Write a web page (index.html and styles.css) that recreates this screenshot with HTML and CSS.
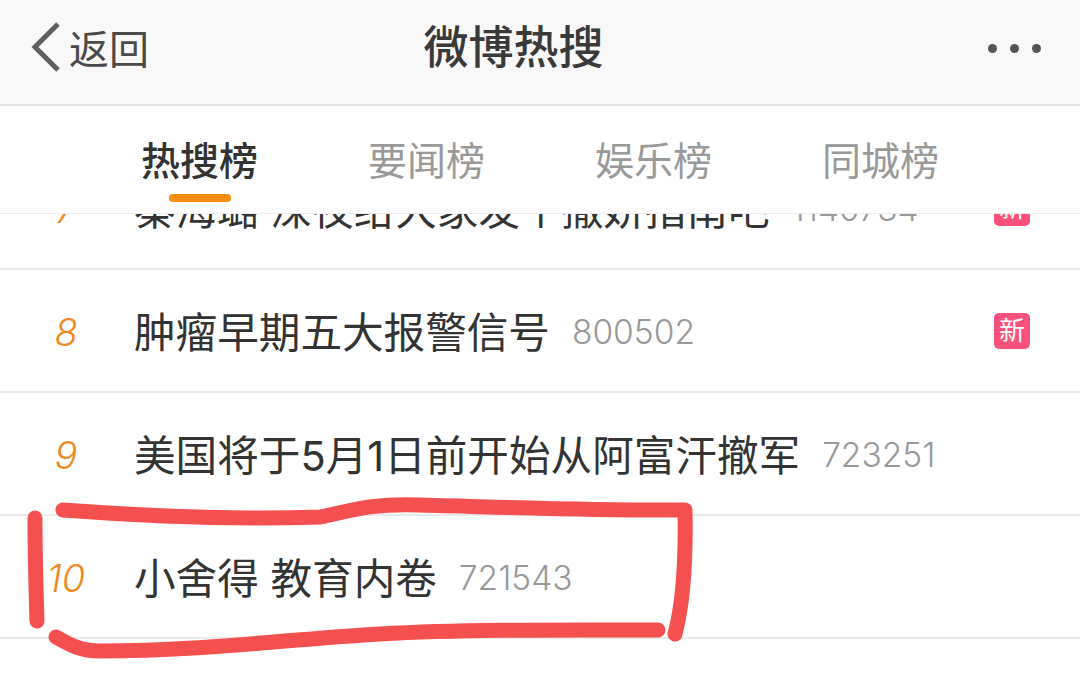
FILE: index.html
```html
<!DOCTYPE html>
<html lang="zh-CN">
<head>
    <meta charset="UTF-8">
    <meta name="viewport" content="width=device-width, initial-scale=1.0">
    <title>微博热搜</title>
    <link rel="stylesheet" href="styles.css">
</head>
<body>
    <div class="page">
        <header class="navbar">
            <div class="back">
                <svg class="back-icon" width="32" height="50" viewBox="0 0 32 50"><path d="M28 2 L5 25 L28 48" fill="none" stroke="#606060" stroke-width="5"/></svg>
                <span>返回</span>
            </div>
            <h1 class="nav-title">微博热搜</h1>
            <div class="more"><i></i><i></i><i></i></div>
        </header>

        <nav class="tabs">
            <div class="tab active">热搜榜</div>
            <div class="tab">要闻榜</div>
            <div class="tab">娱乐榜</div>
            <div class="tab">同城榜</div>
        </nav>

        <div class="list">
            <div class="row row-clipped">
                <span class="rank">7</span>
                <span class="title">秦海璐 深夜给大家发个撒娇指南吧</span>
                <span class="count">1140734</span>
                <span class="badge">新</span>
            </div>
            <div class="row">
                <span class="rank">8</span>
                <span class="title">肿瘤早期五大报警信号</span>
                <span class="count">800502</span>
                <span class="badge">新</span>
            </div>
            <div class="row">
                <span class="rank">9</span>
                <span class="title">美国将于5月1日前开始从阿富汗撤军</span>
                <span class="count">723251</span>
            </div>
            <div class="row">
                <span class="rank">10</span>
                <span class="title">小舍得 教育内卷</span>
                <span class="count">721543</span>
            </div>
        </div>

        <!-- red marker drawn over the screenshot -->
        <svg class="marker" width="1080" height="675" viewBox="0 0 1080 675">
            <g fill="none" stroke="#f55050" stroke-width="15" stroke-linecap="round" stroke-linejoin="round">
                <path d="M35 518 C35 550 36 590 37 621"/>
                <path d="M63 510 C130 515 230 520 320 517 C350 511 370 503 420 505 C500 507 600 511 685 510 C686 560 684 600 675 634"/>
                <path d="M56 637 C70 645 80 651 100 651 C200 651 280 640 380 634 C470 629 570 630 658 630"/>
            </g>
        </svg>
    </div>
</body>
</html>
```

FILE: styles.css
```css
* {
    box-sizing: border-box;
}
html, body {
    margin: 0;
    padding: 0;
}
body {
    font-family: "Liberation Sans", "Noto Sans CJK SC", sans-serif;
    background-color: #fff;
    color: #333;
}
.page {
    position: relative;
    width: 1080px;
    height: 675px;
    overflow: hidden;
}
.navbar {
    display: flex;
    align-items: center;
    justify-content: space-between;
    height: 106px;
    padding: 0 39px 10px 30px;
    background-color: #f8f8f8;
    border-bottom: 2px solid #e4e4e4;
}
.back {
    display: flex;
    align-items: center;
    gap: 7px;
    width: 120px;
    font-size: 40px;
    white-space: nowrap;
    color: #4a4a4a;
}
.nav-title {
    margin: 0 0 5px;
    font-size: 45px;
    font-weight: 500;
    color: #3a3a3a;
}
.more {
    display: flex;
    justify-content: flex-end;
    gap: 13px;
    width: 164px;
    margin-top: 2px;
}
.more i {
    width: 9px;
    height: 9px;
    border-radius: 50%;
    background-color: #555;
}
.tabs {
    position: relative;
    z-index: 1;
    display: flex;
    gap: 110px;
    height: 108px;
    padding: 31px 0 0 141px;
    background-color: #fff;
    border-bottom: 1px solid #ececec;
}
.tab {
    position: relative;
    font-size: 39px;
    line-height: 50px;
    color: #999;
}
.tab.active {
    font-weight: 500;
    color: #333;
}
.tab.active::after {
    content: "";
    position: absolute;
    left: 28px;
    top: 57px;
    width: 62px;
    height: 8px;
    border-radius: 4px;
    background-color: #fa8c0f;
}
.list {
    margin-top: -67px;
}
.row {
    display: flex;
    align-items: center;
    height: 123px;
    padding-top: 2px;
    border-bottom: 2px solid #eaeaea;
}
.rank {
    width: 132px;
    margin-right: 2px;
    text-align: center;
    font-family: Inter, "Liberation Sans", sans-serif;
    font-size: 38px;
    font-style: italic;
    font-weight: 300;
    color: #ee8a1e;
}
.title {
    position: relative;
    top: -2px;
    font-family: Inter, "Noto Sans CJK SC", sans-serif;
    font-size: 41.6px;
    color: #333;
}
.count {
    margin-left: 22px;
    font-family: Inter, "Liberation Sans", sans-serif;
    font-size: 33.5px;
    font-weight: 300;
    color: #999;
}
.badge {
    width: 36px;
    height: 36px;
    margin-left: auto;
    margin-right: 50px;
    margin-bottom: 2px;
    border-radius: 5px;
    background-color: #f8527c;
    color: #fff;
    font-size: 26px;
    line-height: 36px;
    text-align: center;
}
.marker {
    position: absolute;
    left: 0;
    top: 0;
    z-index: 2;
}
```
